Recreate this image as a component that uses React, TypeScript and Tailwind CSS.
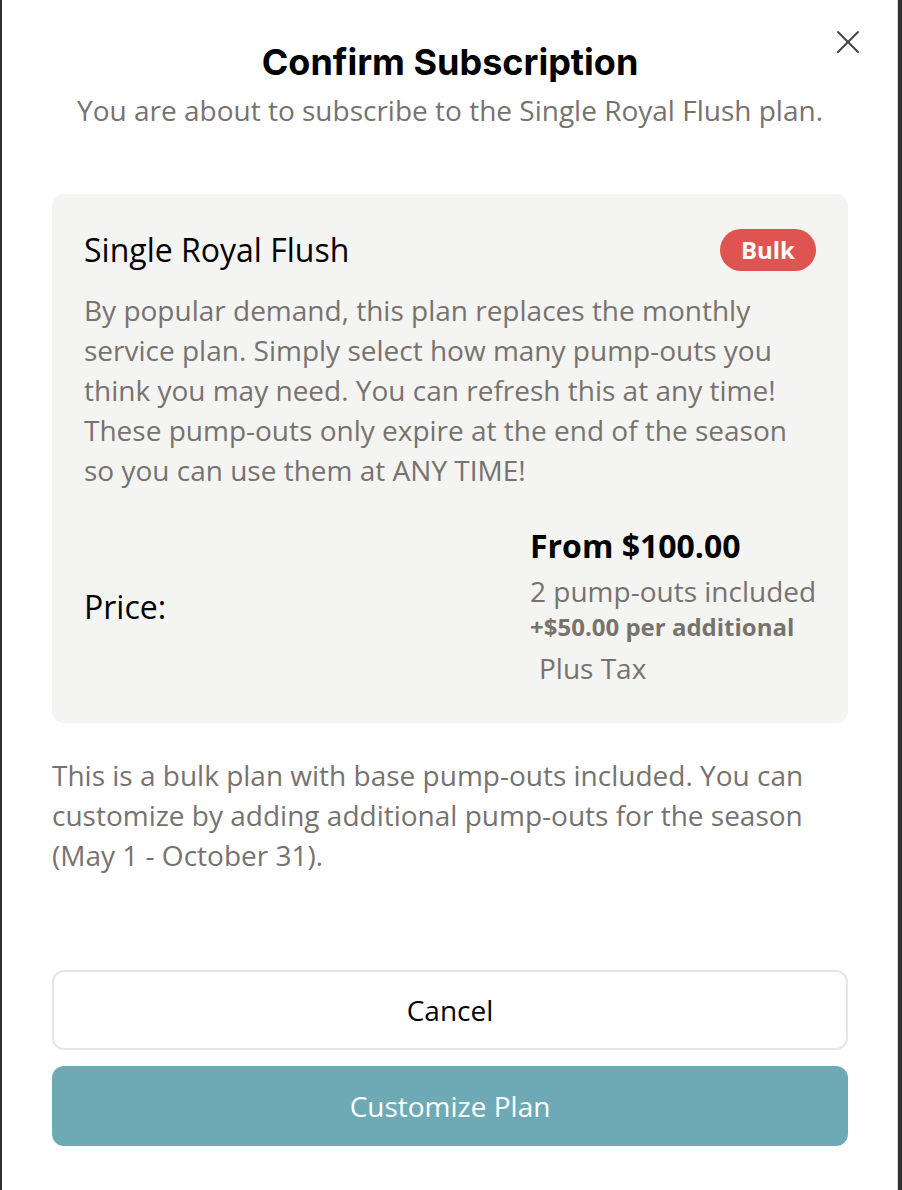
import React from 'react';
import { X } from 'lucide-react';

const body = { fontFamily: '"Open Sans", "Noto Sans", sans-serif' };
const heading = { fontFamily: 'Inter, "Noto Sans", sans-serif' };

export default function ConfirmSubscription() {
  return (
    <div className="flex h-[1190px] w-[902px] bg-[#2f2f2f]" style={body}>
      <div className="ml-[2px] mr-[4px] flex flex-1 flex-col border-r border-[#d9d9d9] bg-white pl-[50px] pr-[49px]">
        <div className="relative pt-[40px] text-center">
          <h2 className="text-[36px] leading-[44px] font-bold text-black" style={heading}>
            Confirm Subscription
          </h2>
          <p className="mt-[6px] text-[28px] leading-[40px] text-[#78726f]">
            You are about to subscribe to the Single Royal Flush plan.
          </p>
          <button className="absolute top-[22px] right-[-20px] text-[#444]">
            <X className="h-[40px] w-[40px]" strokeWidth={1.2} />
          </button>
        </div>

        <div className="mt-[64px] rounded-[12px] bg-[#f4f4f2] px-[32px] pt-[35px] pb-[35px]">
          <div className="flex items-center justify-between">
            <h3 className="text-[32px] leading-[40px] text-black">Single Royal Flush</h3>
            <span className="rounded-full bg-[#df5450] px-[21px] py-[3px] text-[24px] leading-[36px] font-bold text-white">
              Bulk
            </span>
          </div>
          <p className="mt-[19px] text-[28px] leading-[40px] text-[#78726f]">
            By popular demand, this plan replaces the monthly
            <br />
            service plan. Simply select how many pump-outs you
            <br />
            think you may need. You can refresh this at any time!
            <br />
            These pump-outs only expire at the end of the season
            <br />
            so you can use them at ANY TIME!
          </p>
          <div className="mt-[36px] grid grid-cols-2 items-center">
            <div className="text-[32px] leading-[40px] text-black">Price:</div>
            <div className="pl-[80px] whitespace-nowrap">
              <div className="text-[32px] leading-[40px] font-bold text-black">From $100.00</div>
              <div className="mt-[5px] text-[28px] leading-[40px] text-[#78726f]">2 pump-outs included</div>
              <div className="mt-[1px] text-[24px] leading-[30px] font-bold text-[#78726f]">
                +$50.00 per additional
              </div>
              <div className="mt-[6px] pl-[9px] text-[28px] leading-[40px] text-[#78726f]">Plus Tax</div>
            </div>
          </div>
        </div>

        <p className="mt-[32px] text-[28px] leading-[40px] text-[#78726f]">
          This is a bulk plan with base pump-outs included. You can
          <br />
          customize by adding additional pump-outs for the season
          <br />
          (May 1 - October 31).
        </p>

        <div className="mt-[95px] flex flex-col gap-[16px]">
          <button className="h-[80px] rounded-[12px] border-2 border-[#e6e6e6] bg-white text-[28px] text-black">
            Cancel
          </button>
          <button className="h-[80px] rounded-[12px] bg-[#6eaab6] text-[28px] text-white">
            Customize Plan
          </button>
        </div>
      </div>
    </div>
  );
}
